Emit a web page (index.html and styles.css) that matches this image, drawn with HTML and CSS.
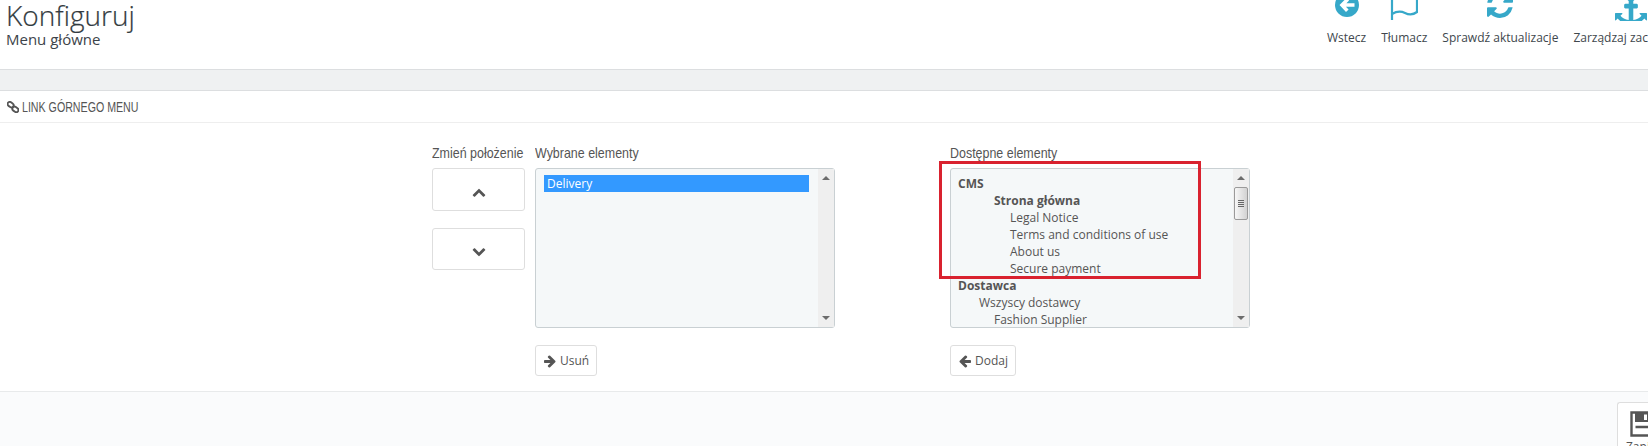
FILE: index.html
```html
<!DOCTYPE html>
<html lang="pl">
<head>
<meta charset="utf-8">
<title>Konfiguruj</title>
<link rel="stylesheet" href="styles.css">
</head>
<body>
<header class="page-head">
  <div class="titles">
    <h1>Konfiguruj</h1>
    <h2>Menu główne</h2>
  </div>
  <nav class="toolbar">
    <a class="tool"><svg class="ico" viewBox="0 0 24 24"><circle cx="12" cy="12" r="12" fill="#36a8c9"/><path fill="#fff" d="M4.5 12l7-7 2.6 2.6-2.7 2.7H19.5v3.4h-8.6l2.7 2.7-2.6 2.6z"/></svg><span>Wstecz</span></a>
    <a class="tool"><svg class="ico" viewBox="0 0 28 32"><path class="flag" d="M2 0V31M2 6C8 3 12 4 15 6S23 9 27 6V23C23 26 19 26 15 24S7 22 2 25"/></svg><span>Tłumacz</span></a>
    <a class="tool"><svg class="ico" viewBox="128 128 1536 1536"><path fill="#36a8c9" d="M1639 1056q0 5-1 7-64 268-268 434.5t-478 166.5q-146 0-282.5-55t-243.5-157l-129 129q-19 19-45 19t-45-19-19-45v-448q0-26 19-45t45-19h448q26 0 45 19t19 45-19 45l-137 137q71 66 161 102t187 36q134 0 250-65t186-179q11-17 53-117 8-23 30-23h192q13 0 22.5 9.5t9.5 22.5zm25-800v448q0 26-19 45t-45 19h-448q-26 0-45-19t-19-45 19-45l138-138q-148-137-349-137-134 0-250 65t-186 179q-11 17-53 117-8 23-30 23h-199q-13 0-22.5-9.5t-9.5-22.5v-7q65-268 270-434.5t480-166.5q146 0 284 55.5t245 156.5l130-129q19-19 45-19t45 19 19 45z"/></svg><span>Sprawdź aktualizacje</span></a>
    <a class="tool"><svg class="ico" viewBox="0 0 1792 1792"><path fill="#36a8c9" d="M960 256q0-26-19-45t-45-19-45 19-19 45 19 45 45 19 45-19 19-45zm832 1120v352q0 22-20 30-8 2-12 2-12 0-23-9l-93-93q-119 143-318.5 226.5t-429.5 83.5-429.5-83.5-318.5-226.5l-93 93q-9 9-23 9-4 0-12-2-20-8-20-30v-352q0-14 9-23t23-9h352q22 0 30 20 8 19-7 35l-100 100q67 91 189.5 153.5t271.5 82.5v-647h-192q-26 0-45-19t-19-45v-128q0-26 19-45t45-19h192v-163q-58-34-93-92.5t-35-128.5q0-106 75-181t181-75 181 75 75 181q0 70-35 128.5t-93 92.5v163h192q26 0 45 19t19 45v128q0 26-19 45t-45 19h-192v647q149-20 271.5-82.5t189.5-153.5l-100-100q-15-16-7-35 8-20 30-20h352q14 0 23 9t9 23z"/></svg><span>Zarządzaj zaczepami</span></a>
  </nav>
</header>
<div class="strip"></div>
<section class="panel">
  <div class="panel-heading">
    <svg class="chain" viewBox="0 0 12 12"><rect x="0.4" y="1.4" width="6.4" height="4.4" rx="2.2" transform="rotate(35 3.5 3.6)"/><rect x="5.2" y="6.2" width="6.4" height="4.4" rx="2.2" transform="rotate(35 8.4 8.4)"/></svg>
    <span class="narrow heading-text">LINK GÓRNEGO MENU</span>
  </div>
  <div class="panel-body">
    <div class="col-move">
      <div class="label"><span class="narrow">Zmień położenie</span></div>
      <button class="move move-up"><svg class="chev" viewBox="0 0 1792 1792"><path d="M1683 1331l-166 165q-19 19-45 19t-45-19l-531-531-531 531q-19 19-45 19t-45-19l-166-165q-19-19-19-45.5t19-45.5l742-741q19-19 45-19t45 19l742 741q19 19 19 45.5t-19 45.5z"/></svg></button>
      <button class="move move-down"><svg class="chev" viewBox="0 0 1792 1792"><path d="M1683 808l-742 741q-19 19-45 19t-45-19l-742-741q-19-19-19-45.5t19-45.5l166-165q19-19 45-19t45 19l531 531 531-531q19-19 45-19t45 19l166 165q19 19 19 45.5t-19 45.5z"/></svg></button>
    </div>
    <div class="col-list">
      <div class="label"><span class="narrow">Wybrane elementy</span></div>
      <div class="listbox">
        <div class="rows rows-selected">
          <div class="row selected">Delivery</div>
        </div>
        <div class="scrollbar">
          <i class="arrow arrow-up"></i>
          <i class="arrow arrow-down"></i>
        </div>
      </div>
      <button class="action"><svg class="arr" viewBox="0 0 1792 1792"><path transform="matrix(-1 0 0 1 1792 0)" d="M1664 896v128q0 53-32.5 90.5t-84.5 37.5h-704l293 294q38 36 38 90t-38 90l-75 76q-37 37-90 37-52 0-91-37l-651-652q-37-37-37-90 0-52 37-91l651-650q38-38 91-38 52 0 90 38l75 74q38 38 38 91t-38 91l-293 293h704q52 0 84.5 37.5t32.5 90.5z"/></svg>Usuń</button>
    </div>
    <div class="col-list col-avail">
      <div class="label"><span class="narrow">Dostępne elementy</span></div>
      <div class="listbox">
        <div class="rows">
          <div class="row l0 bold">CMS</div>
          <div class="row l2 bold">Strona główna</div>
          <div class="row l3">Legal Notice</div>
          <div class="row l3">Terms and conditions of use</div>
          <div class="row l3">About us</div>
          <div class="row l3">Secure payment</div>
          <div class="row l0 bold">Dostawca</div>
          <div class="row l1">Wszyscy dostawcy</div>
          <div class="row l2">Fashion Supplier</div>
        </div>
        <div class="scrollbar">
          <i class="arrow arrow-up"></i>
          <i class="thumb"></i>
          <i class="arrow arrow-down"></i>
        </div>
        <div class="highlight"></div>
      </div>
      <button class="action"><svg class="arr" viewBox="0 0 1792 1792"><path d="M1664 896v128q0 53-32.5 90.5t-84.5 37.5h-704l293 294q38 36 38 90t-38 90l-75 76q-37 37-90 37-52 0-91-37l-651-652q-37-37-37-90 0-52 37-91l651-650q38-38 91-38 52 0 90 38l75 74q38 38 38 91t-38 91l-293 293h704q52 0 84.5 37.5t32.5 90.5z"/></svg>Dodaj</button>
    </div>
  </div>
</section>
<footer class="foot">
  <button class="save">
    <svg class="floppy" viewBox="0 0 26 26"><path d="M1.5 1.5H20L24.5 6V24.5H1.5Z"/><path class="fill" d="M5 1.5H19V11H5Z"/><path class="hole" d="M14 3.5H17V9H14Z"/><path d="M5.5 16H20.5V24.5"/></svg>
    <span>Zapisz</span>
  </button>
</footer>
</body>
</html>
```
FILE: styles.css
```css
* { box-sizing: border-box; }
html, body { margin: 0; height: 446px; overflow: hidden; background: #fff; }
body { font-family: "Open Sans", sans-serif; color: #555; display: flex; flex-direction: column; }

.page-head { height: 69px; flex: none; display: flex; }
.titles { flex: 0 0 1327px; padding: 0 0 0 6px; }
h1 { margin: 0; font-weight: 300; font-size: 28px; line-height: 31px; color: #333b41; -webkit-text-stroke: 0.2px #333b41; }
h2 { margin: -2px 0 0; font-weight: 400; font-size: 15px; line-height: 20px; color: #3c4349; }

.toolbar { flex: none; display: flex; gap: 15px; margin-top: -11px; }
.tool { display: flex; flex-direction: column; align-items: center; font-size: 12px; line-height: 16px; color: #40474d; white-space: nowrap; }
.tool .ico { width: 32px; height: 32px; display: block; margin-bottom: 9px; flex: none; }
.tool:nth-child(1) .ico { width: 24px; }
.tool:nth-child(2) .ico { width: 28px; }
.tool:nth-child(3) .ico { width: 26px; }
.flag { fill: none; stroke: #36a8c9; stroke-width: 2.2; }

.strip { height: 22px; flex: none; background: #eff1f2; border-top: 1px solid #dcdee0; border-bottom: 1px solid #dcdee0; }

.panel { height: 300px; flex: none; display: flex; flex-direction: column; }
.panel-heading { height: 32px; flex: none; border-bottom: 1px solid #eee; padding: 0 0 0 7px; display: flex; align-items: center; gap: 3px; color: #555; }
.chain { width: 12px; height: 12px; flex: none; }
.chain rect { fill: none; stroke: #555; stroke-width: 1.9; }
.narrow { display: inline-block; font-family: "Liberation Sans", sans-serif; font-size: 15px; transform: scaleX(0.83); transform-origin: left center; white-space: nowrap; }
.heading-text { font-size: 14px; transform: scaleX(0.76); }

.panel-body { flex: 1; display: flex; padding: 20px 0 0 432px; }
.label { line-height: 18px; height: 25px; color: #555; white-space: nowrap; }

.col-move { width: 93px; margin-right: 10px; display: flex; flex-direction: column; }
.move { width: 93px; padding: 0; background: #fff; border: 1px solid #dedede; border-radius: 3px; display: flex; align-items: center; justify-content: center; }
.move-up { height: 43px; margin-bottom: 17px; }
.move-down { height: 42px; }
.chev { width: 14px; height: 14px; fill: #555; margin-top: 4px; }

.col-list { width: 300px; display: flex; flex-direction: column; align-items: flex-start; }
.col-avail { margin-left: 115px; }
.listbox { position: relative; width: 300px; height: 160px; display: flex; background: #f5f8f9; border: 1px solid #c9d0d3; border-radius: 3px; margin-bottom: 17px; }
.rows { flex: 1; padding: 6px 0 0 7px; overflow: hidden; font-size: 12px; line-height: 17px; color: #555; }
.rows-selected { padding: 6px 9px 0 8px; }
.row { height: 17px; white-space: nowrap; }
.selected { background: #3399ff; color: #fff; padding-left: 3px; }
.bold { font-weight: 700; }
.l0 { padding-left: 0; }
.l1 { padding-left: 21px; }
.l2 { padding-left: 36px; }
.l3 { padding-left: 52px; }

.scrollbar { flex: 0 0 16px; background: #efefef; display: flex; flex-direction: column; align-items: center; padding: 7px 0; position: relative; justify-content: space-between; }
.arrow { width: 0; height: 0; border-left: 4px solid transparent; border-right: 4px solid transparent; }
.arrow-up { border-bottom: 4px solid #6c6c6c; }
.arrow-down { border-top: 4px solid #6c6c6c; }
.thumb { position: absolute; left: 1px; top: 18px; width: 14px; height: 33px; border: 1px solid #9a9a9a; border-radius: 2px; background: repeating-linear-gradient(#666 0 1px, transparent 1px 2px) center / 6px 7px no-repeat, linear-gradient(90deg, #f7f7f7, #d2d2d2); }

.highlight { position: absolute; left: -12px; top: -8px; width: 262px; height: 118px; border: 3px solid #d9222f; pointer-events: none; }

.action { height: 31px; padding: 0 7px; background: #fff; border: 1px solid #dedede; border-radius: 3px; display: flex; align-items: center; gap: 3px; font-family: "Open Sans", sans-serif; font-size: 12px; color: #555; }
.arr { width: 14px; height: 14px; fill: #555; }

.foot { flex: 1; background: #fafbfc; border-top: 1px solid #e8eaeb; display: flex; justify-content: flex-end; align-items: flex-start; overflow: hidden; padding-top: 10px; }
.save { flex: none; width: 31px; height: 60px; margin: 0; padding: 8px 0 0 12px; background: #fff; border: 1px solid #dedede; border-right: 0; border-radius: 3px 0 0 0; display: flex; flex-direction: column; align-items: flex-start; font-family: "Open Sans", sans-serif; font-size: 12px; color: #555; overflow: hidden; }
.floppy { width: 26px; height: 26px; flex: none; fill: none; stroke: #555; stroke-width: 2.4; margin-bottom: 1px; }
.floppy .fill { fill: #555; stroke: none; }
.floppy .hole { fill: #fff; stroke: none; }
.save span { margin-left: -4px; }
```
